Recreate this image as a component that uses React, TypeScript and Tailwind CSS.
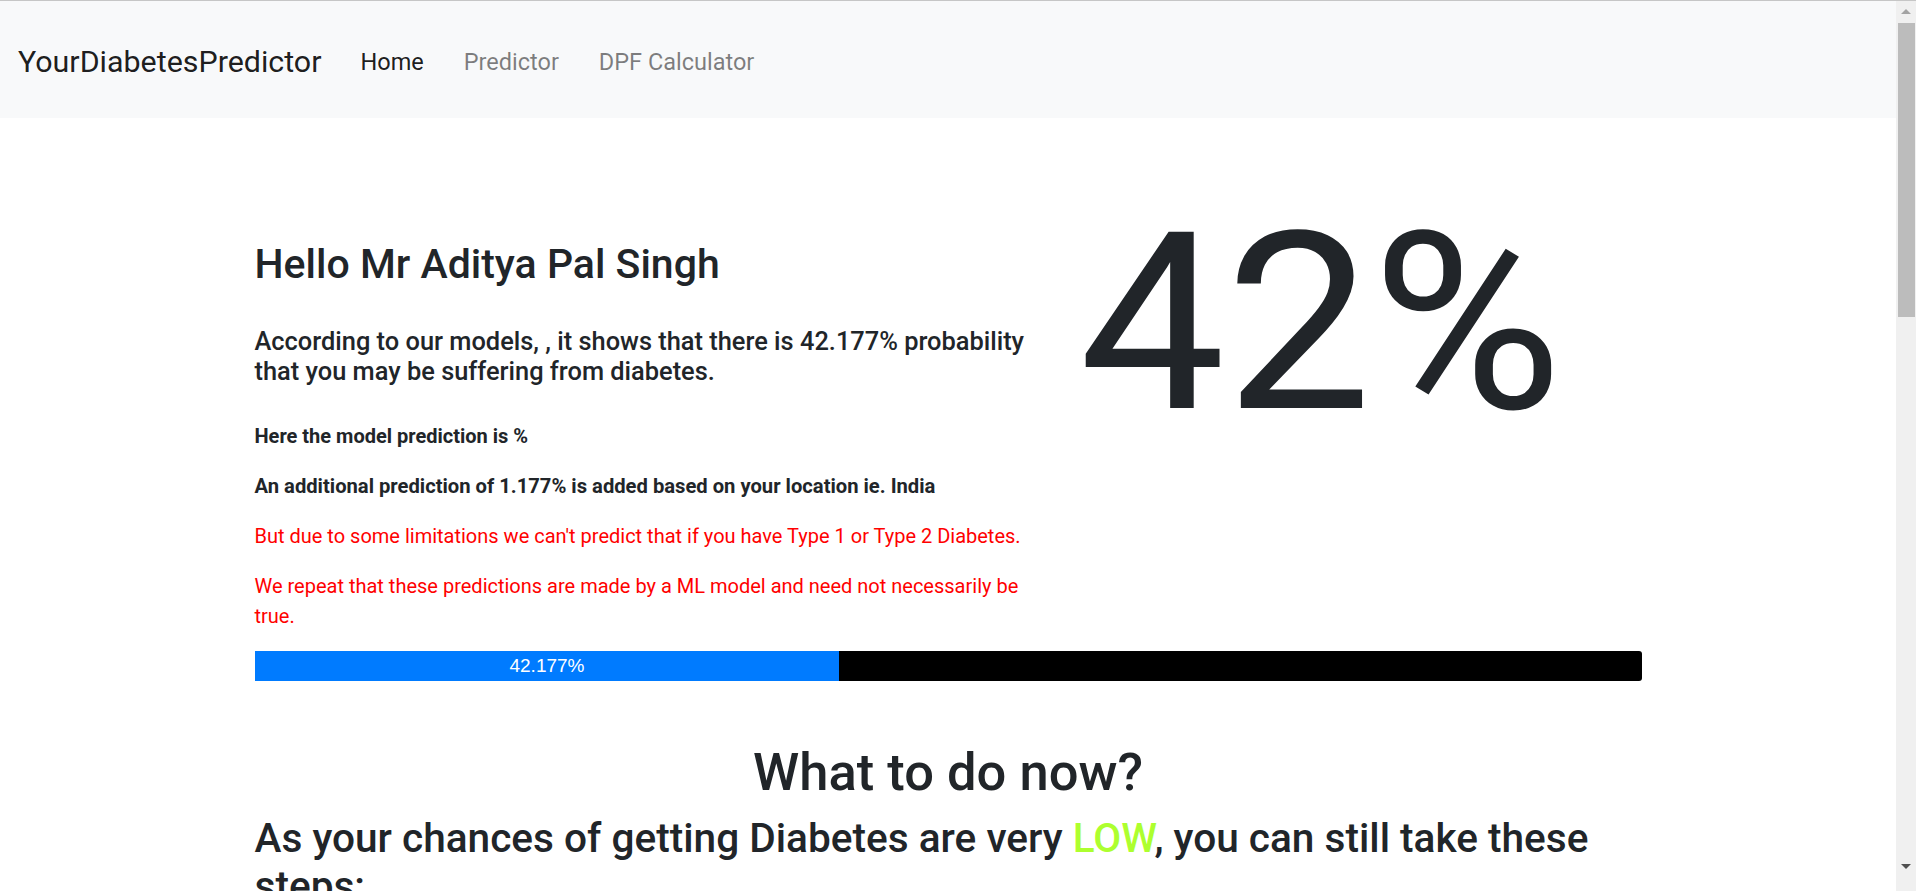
export default function App() {
  return (
    <div className="h-[891px] w-full overflow-hidden flex flex-col bg-white text-[#212529] font-['Roboto',sans-serif]">
      <div className="h-px w-full bg-[#c6c6c6] shrink-0" />
      <div className="flex flex-1 min-h-0">
        <main className="flex-1 min-w-0 overflow-hidden">
          <nav className="h-[117px] bg-[#f8f9fa] flex items-center pl-[18px] pt-[6px]">
            <span className="text-[30.4px] font-normal text-black/90 leading-none">YourDiabetesPredictor</span>
            <span className="ml-[39px] text-[23.5px] text-black/90 leading-none">Home</span>
            <span className="ml-[40px] text-[23.5px] text-black/50 leading-none">Predictor</span>
            <span className="ml-[40px] text-[23.5px] text-black/50 leading-none">DPF Calculator</span>
          </nav>
          <div className="w-[1387px] mx-auto">
            <div className="grid grid-cols-[794px_1fr] gap-x-[37px] mt-[72px]">
              <div>
                <h3 className="mt-[53px] text-[41px] leading-[42px] font-medium">Hello Mr Aditya Pal Singh</h3>
                <h5 className="mt-[41px] text-[25.4px] leading-[30px] font-medium">
                  According to our models, , it shows that there is 42.177% probability that you may be suffering from diabetes.
                </h5>
                <p className="mt-[35px] text-[20px] leading-[30px] font-bold mb-[20px]">Here the model prediction is %</p>
                <p className="text-[20.2px] leading-[30px] font-bold mb-[20px]">An additional prediction of 1.177% is added based on your location ie. India</p>
                <p className="text-[20px] leading-[30px] text-[#ff0000] mb-[20px]">But due to some limitations we can't predict that if you have Type 1 or Type 2 Diabetes.</p>
                <p className="text-[20px] leading-[30px] text-[#ff0000] mb-[20px]">We repeat that these predictions are made by a ML model and need not necessarily be true.</p>
              </div>
              <div>
                <div className="-ml-[7px] mt-[10px] text-[248px] leading-none font-normal origin-left scale-x-[1.05]">42%</div>
              </div>
            </div>
            <div className="h-[30px] bg-black flex rounded-r-[3px]">
              <div className="w-[42.177%] bg-[#007bff] flex items-center justify-center text-white text-[19px] font-['Liberation_Sans',sans-serif]">42.177%</div>
            </div>
            <h1 className="mt-[61px] text-center text-[52.5px] leading-[60px] font-medium">What to do now?</h1>
            <h2 className="mt-[12px] text-[40.6px] leading-[48px] font-medium">
              As your chances of getting Diabetes are very <span className="text-[#adff2f]">LOW</span>, you can still take these steps:
            </h2>
          </div>
        </main>
        <div className="w-[20px] shrink-0 bg-[#f0f0f0] relative">
          <div className="absolute left-[2px] right-[1px] top-[22px] h-[294px] bg-[#bcbcbc]" />
          <div className="absolute left-1/2 -translate-x-1/2 top-[8px] w-0 h-0 border-l-[5px] border-r-[5px] border-b-[5px] border-l-transparent border-r-transparent border-b-[#a3a3a3]" />
          <div className="absolute left-1/2 -translate-x-1/2 bottom-[22px] w-0 h-0 border-l-[5px] border-r-[5px] border-t-[5px] border-l-transparent border-r-transparent border-t-[#505050]" />
        </div>
      </div>
    </div>
  );
}
